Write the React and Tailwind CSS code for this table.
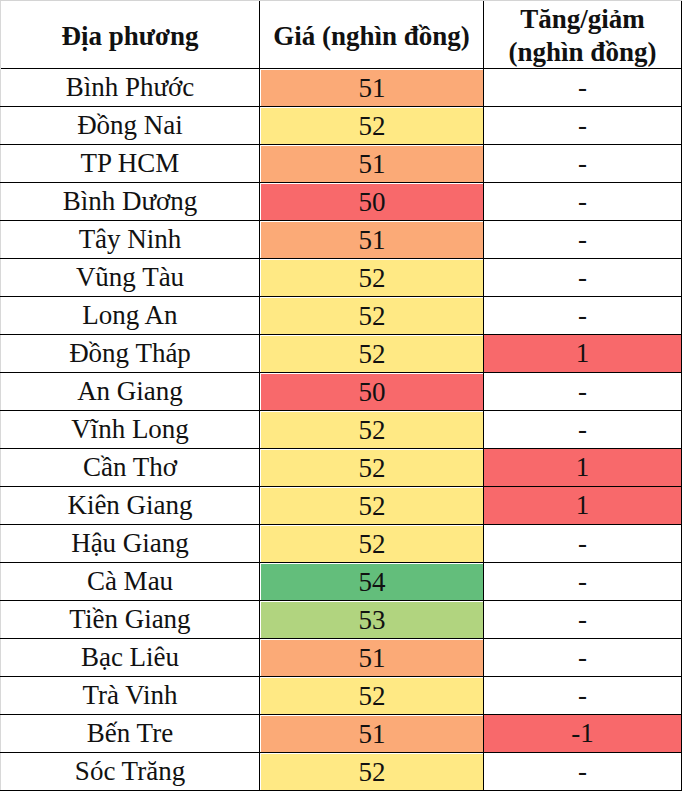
import React from 'react';

const rows = [
  { name: 'Bình Phước', price: 51, change: '-' },
  { name: 'Đồng Nai', price: 52, change: '-' },
  { name: 'TP HCM', price: 51, change: '-' },
  { name: 'Bình Dương', price: 50, change: '-' },
  { name: 'Tây Ninh', price: 51, change: '-' },
  { name: 'Vũng Tàu', price: 52, change: '-' },
  { name: 'Long An', price: 52, change: '-' },
  { name: 'Đồng Tháp', price: 52, change: '1' },
  { name: 'An Giang', price: 50, change: '-' },
  { name: 'Vĩnh Long', price: 52, change: '-' },
  { name: 'Cần Thơ', price: 52, change: '1' },
  { name: 'Kiên Giang', price: 52, change: '1' },
  { name: 'Hậu Giang', price: 52, change: '-' },
  { name: 'Cà Mau', price: 54, change: '-' },
  { name: 'Tiền Giang', price: 53, change: '-' },
  { name: 'Bạc Liêu', price: 51, change: '-' },
  { name: 'Trà Vinh', price: 52, change: '-' },
  { name: 'Bến Tre', price: 51, change: '-1' },
  { name: 'Sóc Trăng', price: 52, change: '-' },
];

// excel style colour scale for the price column
const priceColor = {
  50: 'bg-[#f8696b]',
  51: 'bg-[#fbaa77]',
  52: 'bg-[#ffe984]',
  53: 'bg-[#b1d47f]',
  54: 'bg-[#63be7b]',
};

const App = () => {
  return (
    <div className="w-[686px] h-[798px] bg-white text-[#111] font-serif">
      <div className="w-[682px] border-t border-[#d4d4d4] font-[Liberation_Serif,serif]">
        {/* header */}
        <div className="grid grid-cols-[260px_224px_198px] h-[68px] border-b border-black font-bold text-[27px]">
          <div className="border-r border-black border-l border-l-[#d8d8d8] flex items-center justify-center pt-[2px] leading-[33px]">
            Địa phương
          </div>
          <div className="border-r border-black flex items-center justify-center pt-[2px] leading-[33px]">
            Giá (nghìn đồng)
          </div>
          <div className="border-r border-black flex flex-col items-center justify-center pt-[2px] leading-[33px] text-center">
            <span>Tăng/giảm</span>
            <span>(nghìn đồng)</span>
          </div>
        </div>

        {rows.map((row) => (
          <div
            key={row.name}
            className="grid grid-cols-[260px_224px_198px] h-[38px] border-b border-black text-[27px] leading-[37px]"
          >
            <div className="border-r border-black border-l border-l-[#d8d8d8] text-center">{row.name}</div>
            <div className="border-r border-black pl-px pt-px">
              <div className={`h-full text-center leading-[36px] ${priceColor[row.price]}`}>{row.price}</div>
            </div>
            <div className={`border-r border-black text-center ${row.change !== '-' ? 'bg-[#f8696b]' : ''}`}>
              {row.change}
            </div>
          </div>
        ))}
      </div>
    </div>
  );
};

export default App;
